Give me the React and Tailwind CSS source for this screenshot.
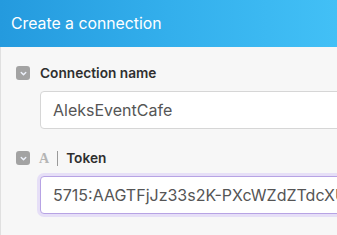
import React from 'react';

const Toggle = () => (
    <div className="w-[14px] h-[14px] rounded-[3px] bg-[#a3a3a3] flex items-center justify-center shrink-0">
        <svg width="9" height="9" viewBox="0 0 10 10" fill="none">
            <path d="M2.5 3.8 L5 6.3 L7.5 3.8" stroke="#eef2fb" strokeWidth="1.6" strokeLinecap="round" strokeLinejoin="round" />
        </svg>
    </div>
);

const App = () => {
    return (
        <div className="w-[337px] h-[235px] overflow-hidden flex flex-col" style={{ fontFamily: 'Inter, "Noto Sans", sans-serif' }}>
            <div className="h-[47px] shrink-0 flex items-center px-[11px] bg-gradient-to-r from-[#249ade] via-[#33afec] to-[#42c0f6]">
                <h1 className="text-white text-[15.8px] font-normal">Create a connection</h1>
            </div>

            <div className="flex-1 bg-[#f7f7f7] border-l border-[#e0e0e0] pl-[15px] pt-[19px]">
                <div className="flex items-center gap-[10px] h-[14px]">
                    <Toggle />
                    <span className="text-[13.7px] font-semibold text-[#2f2f2f]">Connection name</span>
                </div>
                <div className="ml-[24px] mt-[11px] w-[330px] h-[38px] bg-white border border-[#d6d6d6] rounded-[4px] flex items-center px-[12px]">
                    <span className="text-[16px] text-[#555] whitespace-nowrap">AleksEventCafe</span>
                </div>

                <div className="flex items-center h-[14px] mt-[22px]">
                    <Toggle />
                    <span className="ml-[9px] text-[14px] font-bold text-[#b5b5b5]" style={{ fontFamily: '"Liberation Serif", serif' }}>A</span>
                    <span className="ml-[8px] w-px h-[15px] bg-[#9a9a9a]" />
                    <span className="ml-[8px] text-[13.7px] font-semibold text-[#2f2f2f]">Token</span>
                </div>
                <div className="ml-[24px] mt-[11px] w-[330px] h-[38px] bg-white border border-[#b7a3e4] rounded-[4px] ring-[3px] ring-[#e6dff7] flex items-center px-[12px] overflow-hidden">
                    <span className="text-[16px] text-[#555] whitespace-nowrap">5715:AAGTFjJz33s2K-PXcWZdZTdcXUc</span>
                </div>
            </div>
        </div>
    );
};

export default App;
